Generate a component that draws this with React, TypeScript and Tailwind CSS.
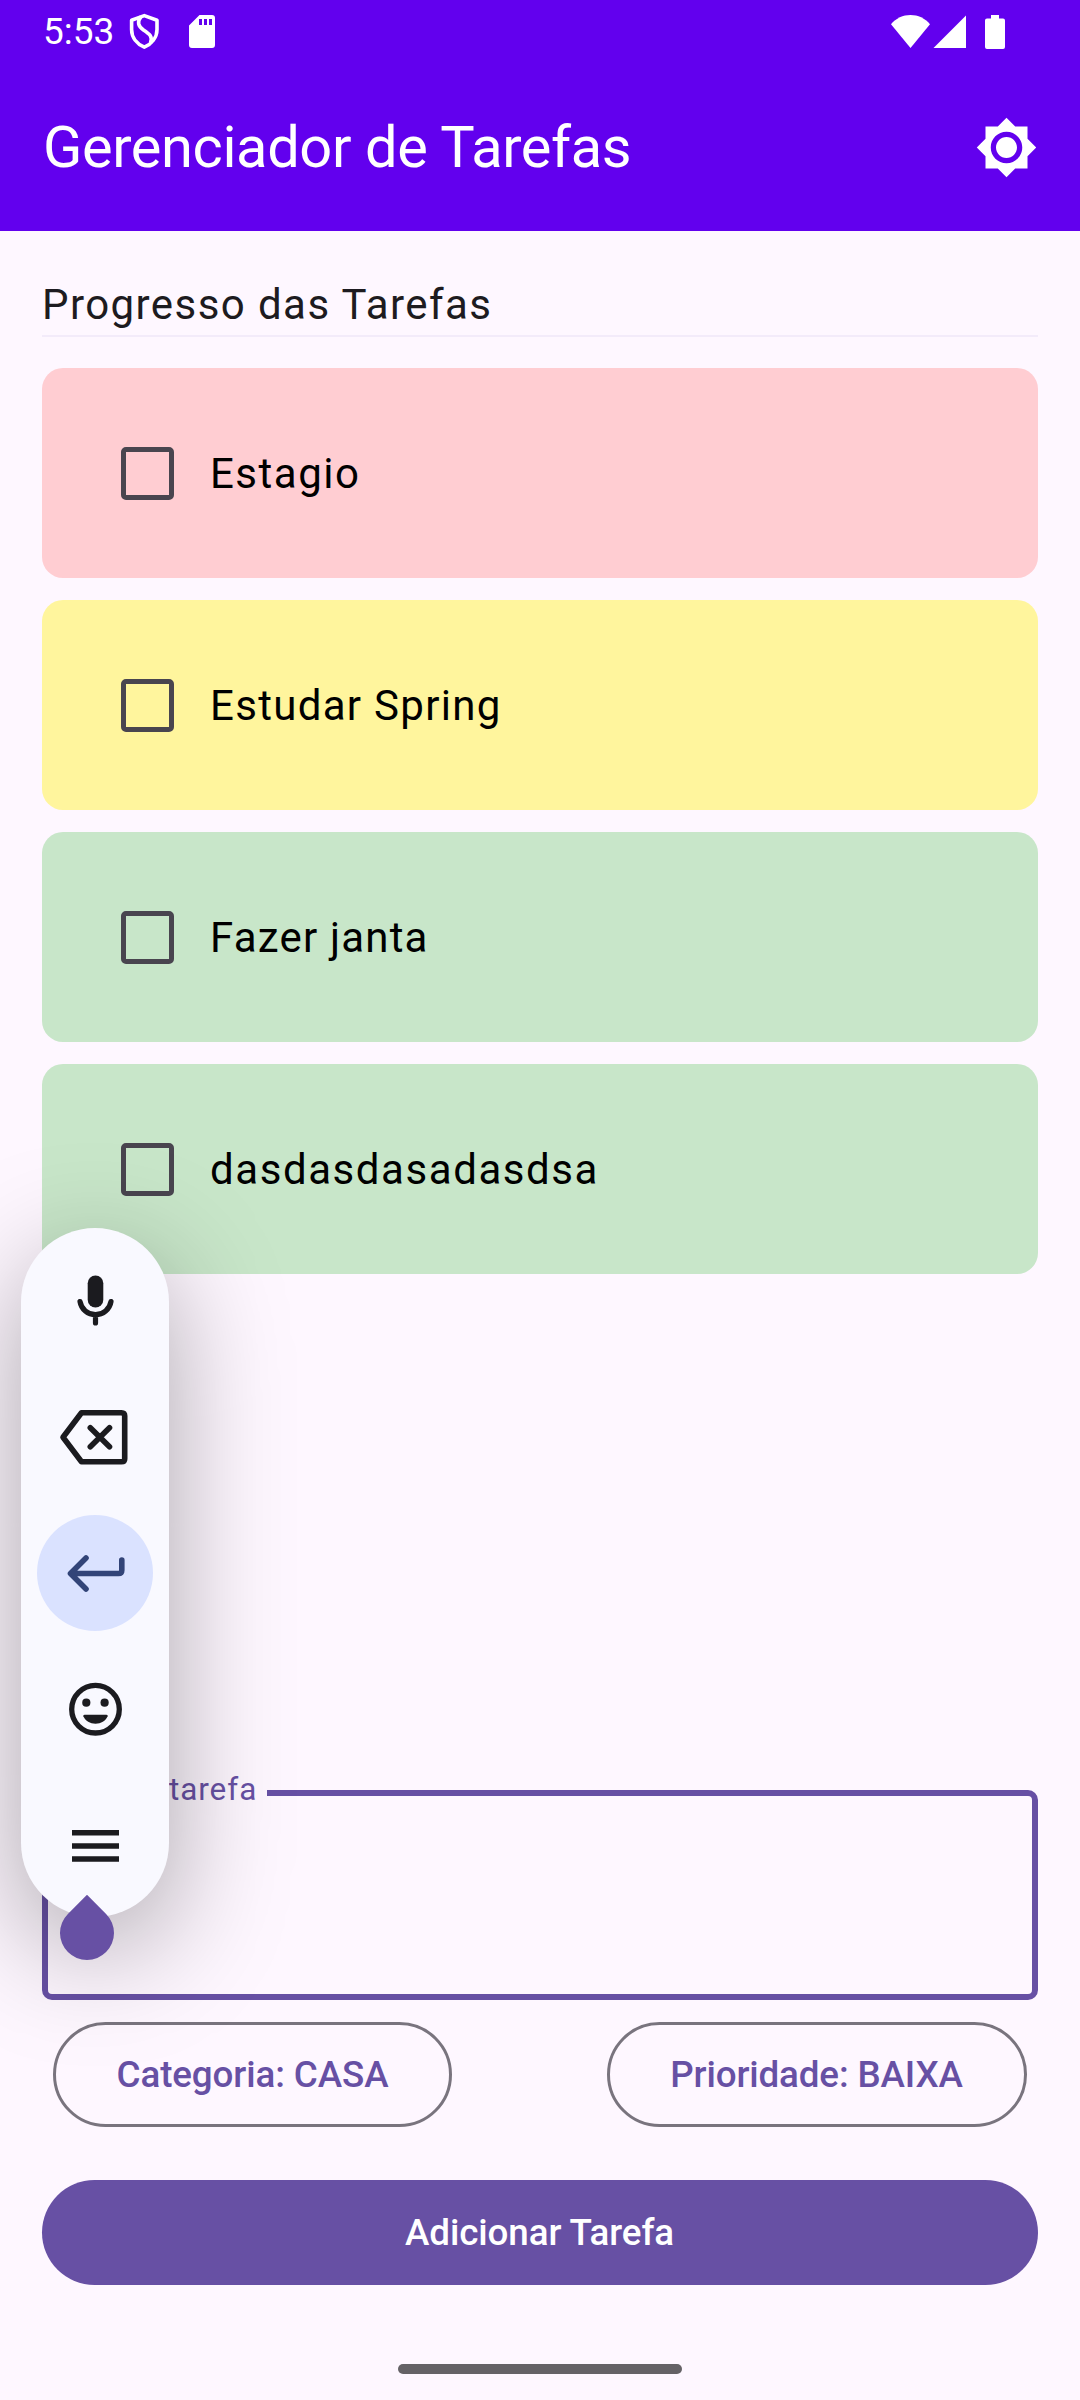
import type { ReactNode } from "react";

const tasks = [
  { title: "Estagio", tone: "bg-[#ffcdd2]", tracking: "tracking-[1.500px]" },
  { title: "Estudar Spring", tone: "bg-[#fff59d]", tracking: "tracking-[1.3125px]" },
  { title: "Fazer janta", tone: "bg-[#c8e6c9]", tracking: "tracking-[1.200px]" },
  { title: "dasdasdasadasdsa", tone: "bg-[#c8e6c9]", tracking: "tracking-[1.570px]" },
];

function StatusBar() {
  return (
    <div className="flex h-[63px] items-center justify-between pl-[43px] pr-[75px]">
      <div className="flex items-center">
        <span className="w-[86px] text-[37px] leading-[63px]">5:53</span>
        <svg width="31" height="37" viewBox="0 0 31 37" fill="none" stroke="currentColor" strokeWidth="3.600">
          <path d="M15.3 2.6 28 7.2V16.5C28 24.500 22.500 31 15.300 34.200C8 31 2.600 24.500 2.600 16.500V7.200Z" strokeLinejoin="round" />
          <path d="M12 3.700C8 9 9 13 14.500 17C20.500 21 24 23.500 21.500 30" />
        </svg>
        <svg className="ml-[29px]" width="26" height="33" viewBox="0 0 26 33" fill="currentColor">
          <path fillRule="evenodd" d="M10.500 0H23Q26 0 26 3V30Q26 33 23 33H3Q0 33 0 30V10.500ZM10 4V10H13V4ZM15 4V10H18V4ZM20 4V10H23V4Z" />
        </svg>
      </div>
      <div className="flex items-center">
        <svg width="39" height="33" viewBox="0 0 39 33" fill="currentColor">
          <path d="M19.500 33 0 9.200C5 3.200 12 0 19.500 0S34 3.200 39 9.200Z" />
        </svg>
        <svg className="ml-[3px]" width="33" height="33" viewBox="0 0 33 33" fill="currentColor">
          <path d="M0.500 33H33V0.500Z" />
        </svg>
        <svg className="ml-[19px]" width="20" height="34" viewBox="0 0 20 34" fill="currentColor">
          <path d="M6 0H14V3.500H18Q20 3.500 20 5.500V32Q20 34 18 34H2Q0 34 0 32V5.500Q0 3.500 2 3.500H6Z" />
        </svg>
      </div>
    </div>
  );
}

function ToolKey({ active, children }: { active?: boolean; children: ReactNode }) {
  return (
    <div className="flex h-[136.25px] items-center justify-center">
      <div className={active ? "size-[116px] rounded-full bg-[#dae2ff] text-[#324478]" : "size-[116px] text-[#1b1b1f]"}>
        <svg width="116" height="116" viewBox="0 0 116 116" fill="none" stroke="currentColor" strokeWidth="5.600" strokeLinecap="round" strokeLinejoin="round">
          {children}
        </svg>
      </div>
    </div>
  );
}

function KeyboardToolbar() {
  return (
    <div className="absolute left-[21px] top-[1228px] flex h-[689px] w-[148px] flex-col justify-center rounded-[74px] bg-[#f9f9ff] pt-px shadow-[0_32px_116px_rgba(0,0,0,0.34)]">
      <ToolKey>
        <rect x="50.700" y="32.500" width="15.600" height="32" rx="7.800" fill="currentColor" stroke="none" />
        <path d="M43 58.500A15.700 15.700 0 0 0 74 58.500M58.500 72V80" strokeWidth="5.200" />
      </ToolKey>
      <ToolKey>
        <path d="M26 58.300 44.500 33.700H84.500Q87.700 33.700 87.700 36.900V79.700Q87.700 82.800 84.500 82.800H44.500Z" />
        <path d="M53.300 48.700 72.500 67.800M72.500 48.700 53.300 67.800" />
      </ToolKey>
      <ToolKey active>
        <path d="M49 43 33.500 58.500 49 74M34 58.500H81.500Q84.800 58.500 84.800 55.200V45" />
      </ToolKey>
      <ToolKey>
        <circle cx="58.500" cy="58.200" r="23.800" strokeWidth="5.300" />
        <circle cx="49.300" cy="51.700" r="4.100" fill="currentColor" stroke="none" />
        <circle cx="67.600" cy="51.700" r="4.100" fill="currentColor" stroke="none" />
        <path d="M47.500 63.700H69.500Q71.200 63.700 70.600 65.300C68.500 70 64 72.800 58.500 72.800S48.500 70 46.400 65.300Q45.800 63.700 47.500 63.700Z" fill="currentColor" stroke="none" />
      </ToolKey>
      <ToolKey>
        <path d="M35 44.700H82M35 58H82M35 71H82" strokeLinecap="butt" />
      </ToolKey>
    </div>
  );
}

export default function App() {
  return (
    <div className="relative flex h-[2400px] w-[1080px] flex-col overflow-hidden bg-[#fef7ff] font-[Roboto,sans-serif]">
      <header className="h-[231px] bg-[#6200ee] text-white">
        <StatusBar />
        <div className="flex h-[168px] items-center justify-between pl-[43px] pr-[42px]">
          <h1 className="text-[57.750px] leading-[74px] tracking-[-0.380px]">Gerenciador de Tarefas</h1>
          <svg width="63" height="63" viewBox="0 0 24 24" fill="currentColor">
            <path d="M20 8.690V4h-4.690L12 .690 8.690 4H4v4.690L.690 12 4 15.310V20h4.690L12 23.310 15.310 20H20v-4.690L23.310 12 20 8.690zM12 18c-3.310 0-6-2.690-6-6s2.690-6 6-6 6 2.690 6 6-2.690 6-6 6zm0-10c-2.210 0-4 1.790-4 4s1.790 4 4 4 4-1.790 4-4-1.790-4-4-4z" />
          </svg>
        </div>
      </header>

      <main className="flex grow flex-col px-[42px] pt-[42px]">
        <h2 className="h-[62px] text-[42px] leading-[63px] tracking-[1.430px] text-[#1d1b20]">Progresso das Tarefas</h2>
        <div className="h-[2px] bg-[#f3ebfa]" />

        <ul className="mt-[31px] flex flex-col gap-[22px]">
          {tasks.map((task) => (
            <li key={task.title} className={`flex h-[210px] items-center rounded-[21px] pl-[79px] ${task.tone}`}>
              <span className="size-[53px] rounded-[5px] border-[5px] border-[#49454f]" />
              <span className={`ml-[36px] text-[42px] leading-[63px] text-black ${task.tracking}`}>{task.title}</span>
            </li>
          ))}
        </ul>

        <fieldset className="mt-[498px] h-[228px] shrink-0 rounded-[10px] border-[6px] border-[#6750a4] pl-[26px]">
          <legend className="h-[42px] px-[10px] text-[31.500px] leading-[36px] tracking-[0.950px] text-[#6750a4]">Nova tarefa</legend>
        </fieldset>

        <div className="mt-[22px] flex justify-between px-[11px]">
          <button className="h-[105px] w-[399px] rounded-full border-[3px] border-[#79747e] text-[36.750px] font-medium tracking-[-0.100px] text-[#6750a4]">
            Categoria: CASA
          </button>
          <button className="h-[105px] w-[420px] rounded-full border-[3px] border-[#79747e] pr-[1px] text-[36.750px] font-medium tracking-[-0.130px] text-[#6750a4]">
            Prioridade: BAIXA
          </button>
        </div>

        <button className="mt-[53px] h-[105px] shrink-0 rounded-full bg-[#6750a4] pr-[1px] text-[36.750px] font-medium tracking-[-0.080px] text-white">
          Adicionar Tarefa
        </button>
        <div className="mt-[79px] h-[10px] w-[284px] self-center rounded-full bg-[#656266]" />
      </main>

      <KeyboardToolbar />
      <div className="absolute left-[60px] top-[1906px] size-[54px] rotate-45 rounded-full rounded-tl-none bg-[#6750a4]" />
    </div>
  );
}
